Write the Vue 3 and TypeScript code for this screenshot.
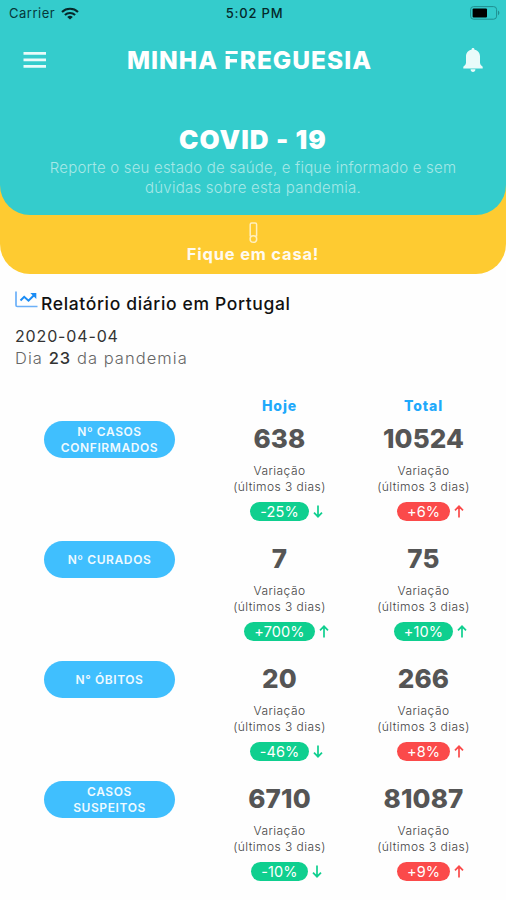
<script setup lang="ts">
type Tone = 'good' | 'bad'

interface Metric {
  id: string
  value: string
  change: string
  direction: 'up' | 'down'
  tone: Tone
}

interface Row {
  label: string[]
  metrics: Metric[]
}

const rows: Row[] = [
  {
    label: ['Nº CASOS', 'CONFIRMADOS'],
    metrics: [
      { id: 'today', value: '638', change: '-25%', direction: 'down', tone: 'good' },
      { id: 'total', value: '10524', change: '+6%', direction: 'up', tone: 'bad' },
    ],
  },
  {
    label: ['Nº CURADOS'],
    metrics: [
      { id: 'today', value: '7', change: '+700%', direction: 'up', tone: 'good' },
      { id: 'total', value: '75', change: '+10%', direction: 'up', tone: 'good' },
    ],
  },
  {
    label: ['N° ÓBITOS'],
    metrics: [
      { id: 'today', value: '20', change: '-46%', direction: 'down', tone: 'good' },
      { id: 'total', value: '266', change: '+8%', direction: 'up', tone: 'bad' },
    ],
  },
  {
    label: ['CASOS', 'SUSPEITOS'],
    metrics: [
      { id: 'today', value: '6710', change: '-10%', direction: 'down', tone: 'good' },
      { id: 'total', value: '81087', change: '+9%', direction: 'up', tone: 'bad' },
    ],
  },
]
</script>

<template>
  <div class="screen">
    <div class="banner">
      <header class="hero">
        <div class="status">
          <div class="carrier">
            <span class="carrier-name">Carrier</span>
            <svg class="wifi" viewBox="0 0 18 13" width="18" height="13">
              <path d="M1 4.9a11.6 11.6 0 0 1 16 0M3.9 8a7.4 7.4 0 0 1 10.2 0" fill="none" stroke="#06282a" stroke-width="2.1" />
              <path d="M9 12.6 6.2 10a4 4 0 0 1 5.6 0z" fill="#06282a" />
            </svg>
          </div>
          <span class="clock">5:02 PM</span>
          <svg class="battery" viewBox="0 0 30 14" width="30" height="14">
            <rect x="0.6" y="0.6" width="26" height="12.6" rx="3" fill="none" stroke="#1f8f90" />
            <rect x="2.6" y="2.6" width="14.4" height="8.8" rx="1" fill="#000" />
            <path d="M28 4.6c1.9.9 1.9 3.7 0 4.6z" fill="#1f8f90" />
          </svg>
        </div>

        <nav class="bar">
          <svg class="menu" viewBox="0 0 24 18" width="24" height="18">
            <path d="M.5 2.3h22.5M.5 8.8h22.5M.5 15.3h22.5" stroke="#e9fbfa" stroke-width="2.7" />
          </svg>
          <div class="brand">MINHA <span class="brand-f">F</span>REGUESIA</div>
          <svg class="bell" viewBox="0 0 20 24" width="20" height="24">
            <path d="M10 0c1 0 1.500.7 1.500 1.700 3.400.7 5.500 3.300 5.500 6.800v6c0 2 1.200 3 2.700 4.300v1.700H.3v-1.700C1.800 17.500 3 16.500 3 14.500v-6C3 5 5.100 2.400 8.500 1.700 8.500.7 9 0 10 0zM7.600 21.300h4.800C12.400 23 11.400 24 10 24s-2.400-1-2.400-2.700z" fill="#e9fbfa" />
          </svg>
        </nav>

        <h1 class="title">COVID - 19</h1>
        <p class="intro">
          <span class="intro-first">Reporte o seu estado de saúde, e fique informado e sem</span><br />
          <span class="intro-second">dúvidas sobre esta pandemia.</span>
        </p>
      </header>

      <div class="advice">
        <svg class="thermometer" viewBox="0 0 10 22" width="10" height="22">
          <path d="M2.200 14.500V2.500q0-1.500 1.500-1.500h3.400q1.500 0 1.500 1.500v12" fill="none" stroke="#fff0c0" stroke-width="1.500" />
          <circle cx="5.400" cy="17" r="3.300" fill="none" stroke="#fff0c0" stroke-width="1.500" />
        </svg>
        <strong class="advice-text">Fique em casa!</strong>
      </div>
    </div>

    <section class="report">
      <div class="report-head">
        <svg class="chart" viewBox="0 0 23 18" width="23" height="18">
          <path d="M1 .5v13.700q0 1.300 1.300 1.300H22.500" fill="none" stroke="#6bb0f8" stroke-width="1.700" />
          <path d="m5.500 9.500 3.700-3.700 4.300 3.900 6-6" fill="none" stroke="#1a8cf5" stroke-width="2" />
          <path d="M15.300 2h6v6z" fill="#1a8cf5" />
        </svg>
        <h2 class="report-title">Relatório diário em Portugal</h2>
      </div>
      <div class="date">2020-04-04</div>
      <div class="day">Dia <b>23</b> da pandemia</div>
    </section>

    <section class="table">
      <div class="row heads">
        <span></span>
        <span class="head">Hoje</span>
        <span class="head">Total</span>
      </div>
      <div v-for="row in rows" :key="row.label.join(' ')" class="row figures">
        <div class="pill">
          <span v-for="line in row.label" :key="line">{{ line }}</span>
        </div>
        <div v-for="m in row.metrics" :key="m.id" class="metric">
          <div class="value">{{ m.value }}</div>
          <div class="note">Variação</div>
          <div class="note">(últimos 3 dias)</div>
          <div class="change" :class="m.tone">
            <span class="badge">{{ m.change }}</span>
            <svg class="arrow" :class="m.direction" viewBox="0 0 10 13" width="10" height="13">
              <path d="M5 12.500V1.500M1 5.300l4-4 4 4" fill="none" stroke="currentColor" stroke-width="1.700" />
            </svg>
          </div>
        </div>
      </div>
    </section>
  </div>
</template>

<style>
body {
  margin: 0;
  background: #fff;
}
</style>

<style scoped>
.screen {
  width: 506px;
  height: 900px;
  overflow: hidden;
  background: #fefefe;
  font-family: Inter, "Liberation Sans", sans-serif;
}

.banner {
  height: 274px;
  background: #fecb31;
  border-radius: 0 0 30px 30px;
  overflow: hidden;
}

.hero {
  height: 215px;
  box-sizing: border-box;
  background: #34cccc;
  border-radius: 0 0 30px 30px;
  text-align: center;
  color: #fff;
}

.status {
  display: grid;
  grid-template-columns: 1fr auto 1fr;
  align-items: center;
  height: 26px;
  padding: 0 6px 0 9px;
  font-size: 13px;
  color: #06383a;
}

.carrier {
  display: flex;
  align-items: center;
  gap: 6px;
}

.carrier-name {
  letter-spacing: 0.5px;
}

.clock {
  font-weight: 500;
  letter-spacing: 0.8px;
  color: #04282a;
}

.battery {
  justify-self: end;
}

.bar {
  display: grid;
  grid-template-columns: 60px 1fr 78px;
  align-items: center;
  height: 67px;
  padding: 0 12px 0 23px;
}

.brand {
  font-size: 24.5px;
  font-weight: 800;
  letter-spacing: 1px;
  white-space: nowrap;
}

.brand-f {
  background: linear-gradient(#fff 0 9px, transparent 9px 11px, #fff 11px);
  background-clip: text;
  color: transparent;
}

.bell {
  justify-self: end;
  margin-right: 11px;
}

.title {
  margin: 32px 0 0;
  font-size: 26px;
  line-height: 30px;
  font-weight: 900;
  letter-spacing: 1.05px;
}

.intro {
  margin: 3px 0 0;
  font-size: 15px;
  line-height: 19.5px;
  font-weight: 300;
  color: #a6e8e7;
}

.intro-first {
  letter-spacing: 0.2px;
}

.intro-second {
  letter-spacing: 0.25px;
}

.advice {
  display: flex;
  flex-direction: column;
  align-items: center;
  padding-top: 7px;
}

.advice-text {
  font-size: 16.500px;
  line-height: 20px;
  font-weight: 700;
  letter-spacing: 0.8px;
  color: #fffaf0;
}

.report {
  padding: 17px 15px 0;
}

.report-head {
  display: flex;
  gap: 3px;
}

.report-title {
  margin: 2px 0 0;
  font-size: 17.500px;
  line-height: 22px;
  font-weight: 500;
  letter-spacing: 0.65px;
  color: #111;
}

.date {
  margin-top: 10px;
  font-size: 16px;
  line-height: 22px;
  letter-spacing: 0.85px;
  color: #333;
}

.day {
  font-size: 16.500px;
  line-height: 22px;
  font-weight: 300;
  letter-spacing: 1.05px;
  color: #666;
}

.day b {
  font-weight: 500;
  color: #333;
}

.table {
  padding-top: 27px;
}

.row {
  display: grid;
  grid-template-columns: 207.500px 144px 144px;
}

.heads {
  height: 25px;
}

.head {
  text-align: center;
  font-size: 14px;
  line-height: 20px;
  font-weight: 800;
  letter-spacing: 0.9px;
  color: #1fa9fb;
}

.figures {
  height: 120px;
}

.pill {
  display: flex;
  flex-direction: column;
  align-items: center;
  justify-content: center;
  width: 131px;
  height: 37px;
  margin-left: 44px;
  border-radius: 19px;
  background: #40bffe;
  color: #effaff;
  font-size: 12px;
  line-height: 16px;
  font-weight: 600;
  letter-spacing: 0.6px;
}

.metric {
  display: flex;
  flex-direction: column;
  align-items: center;
}

.value {
  margin-bottom: 6px;
  font-size: 26px;
  line-height: 36px;
  font-weight: 800;
  letter-spacing: 0.15px;
  color: #555;
}

.note {
  font-size: 12px;
  line-height: 16px;
  font-weight: 300;
  letter-spacing: 0.45px;
  color: #444;
}

.change {
  position: relative;
  margin-top: 7px;
}

.badge {
  display: block;
  height: 19px;
  padding: 0 10px;
  border-radius: 10px;
  color: #fff;
  font-size: 14.500px;
  line-height: 19px;
  letter-spacing: 0.1px;
}

.good {
  color: #0fcf8f;
}

.good .badge {
  background: #0fcf8f;
}

.bad {
  color: #fb4a4a;
}

.bad .badge {
  background: #fb4a4a;
}

.change .badge {
  color: #fff;
}

.arrow {
  position: absolute;
  left: calc(100% + 4px);
  top: 3px;
}

.down {
  transform: rotate(180deg);
}
</style>
